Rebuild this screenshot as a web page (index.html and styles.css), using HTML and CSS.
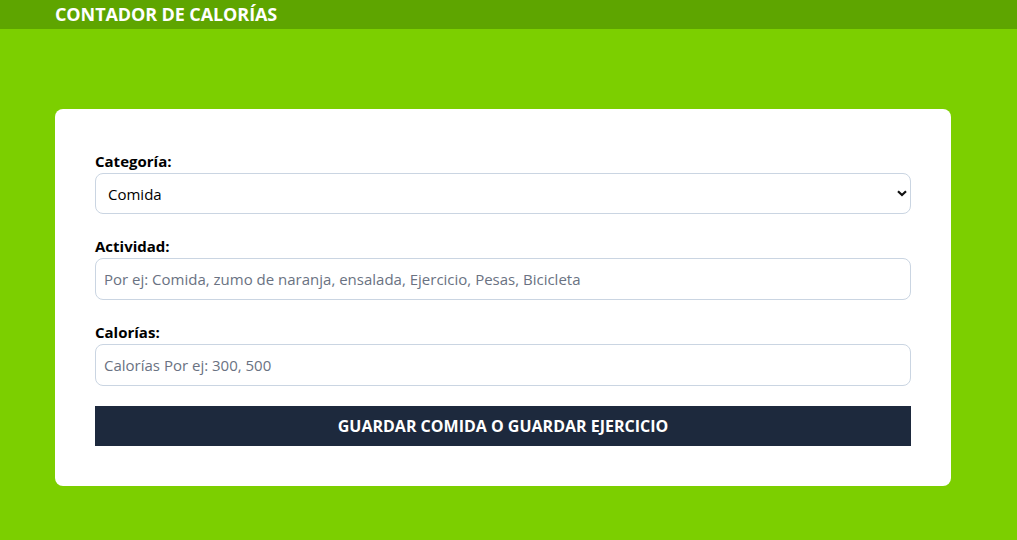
FILE: index.html
```html
<!DOCTYPE html>
<html lang="es">
<head>
<meta charset="utf-8">
<title>Contador de Calorías</title>
<link rel="stylesheet" href="styles.css">
</head>
<body>
<header class="topbar">
  <h1 class="brand">Contador de calorías</h1>
</header>
<main class="wrap">
  <form class="card">
    <div class="field">
      <label class="label" for="categoria">Categoría:</label>
      <div class="select-wrap">
        <select id="categoria" class="control select">
          <option>Comida</option>
          <option>Ejercicio</option>
        </select>
        <svg class="chev" width="10" height="7" viewBox="0 0 10 7"><path d="M1 1.2 L5 5 L9 1.2" fill="none" stroke="#111" stroke-width="2.2"/></svg>
      </div>
    </div>
    <div class="field">
      <label class="label" for="actividad">Actividad:</label>
      <input id="actividad" class="control" type="text" placeholder="Por ej: Comida, zumo de naranja, ensalada, Ejercicio, Pesas, Bicicleta">
    </div>
    <div class="field">
      <label class="label" for="calorias">Calorías:</label>
      <input id="calorias" class="control" type="number" placeholder="Calorías Por ej: 300, 500">
    </div>
    <button type="submit" class="submit">Guardar comida o guardar ejercicio</button>
  </form>
</main>
</body>
</html>
```
FILE: styles.css
```css
* { box-sizing: border-box; }
html, body { margin: 0; padding: 0; }
body {
  background: #7ccf00;
  font-family: "Open Sans", "Noto Sans", sans-serif;
  color: #000;
  min-height: 540px;
}
.topbar {
  background: #5ea500;
  height: 29px;
  padding-left: 55px;
  display: flex;
  align-items: center;
}
.brand {
  margin: 0;
  color: #fff;
  font-size: 18px;
  font-weight: 700;
  text-transform: uppercase;
  letter-spacing: -0.1px;
  line-height: 29px;
}
.wrap {
  padding: 80px 0 0 55px;
}
.card {
  width: 896px;
  background: #fff;
  border-radius: 8px;
  padding: 40px;
  display: flex;
  flex-direction: column;
  gap: 20px;
}
.field {
  display: flex;
  flex-direction: column;
}
.label {
  font-size: 15px;
  font-weight: 700;
  line-height: 24px;
  letter-spacing: 0;
}
.control {
  width: 100%;
  height: 42px;
  border: 1px solid #cad5e2;
  border-radius: 8px;
  background: #fff;
  padding: 0 8px;
  font-family: inherit;
  font-size: 15px;
  color: #000;
  outline: none;
}
.control::placeholder { color: #6a7282; opacity: 1; }
.control[type=number] { -moz-appearance: textfield; }
.control::-webkit-outer-spin-button,
.control::-webkit-inner-spin-button { -webkit-appearance: none; margin: 0; }
.select-wrap { position: relative; }
.select {
  -webkit-appearance: none;
  appearance: none;
  padding-left: 12px;
  height: 41px;
}
.chev {
  position: absolute;
  right: 4px;
  top: 17px;
  pointer-events: none;
}
.submit {
  height: 40px;
  border: 0;
  background: #1d293d;
  color: #fff;
  font-family: inherit;
  font-size: 16px;
  font-weight: 700;
  text-transform: uppercase;
  letter-spacing: 0;
  cursor: pointer;
}
```
